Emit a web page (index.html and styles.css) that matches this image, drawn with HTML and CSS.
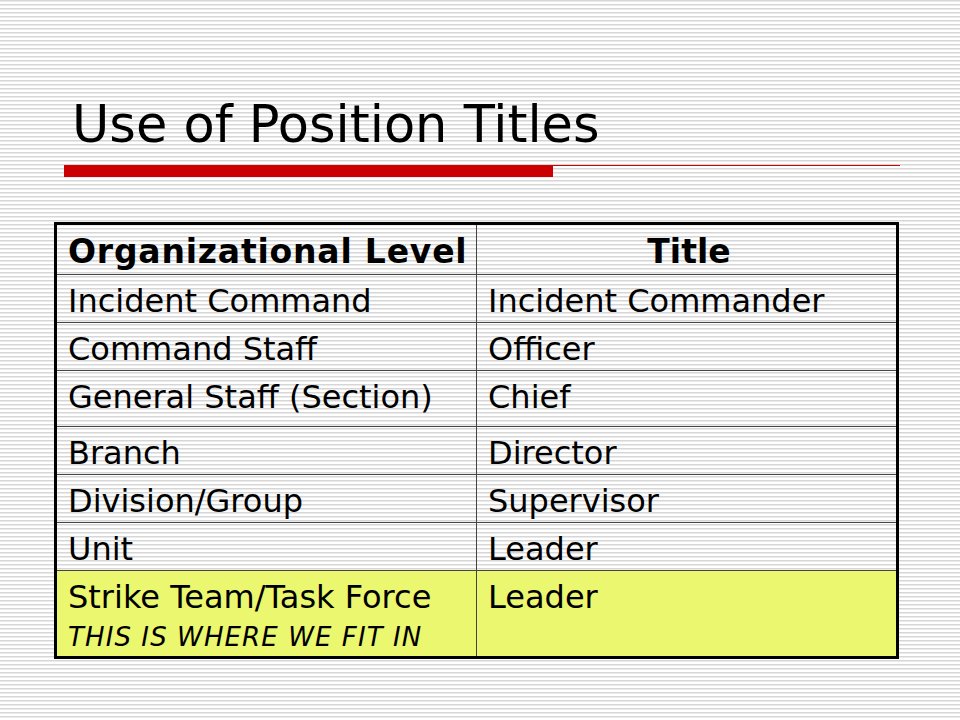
FILE: index.html
```html
<!DOCTYPE html>
<html>
<head>
<meta charset="utf-8">
<link rel="stylesheet" href="styles.css">
</head>
<body>
<div class="slide">
  <h1 class="title">Use of Position Titles</h1>
  <div class="rule">
    <div class="rule-thick"></div>
    <div class="rule-thin"></div>
  </div>
  <table class="grid">
    <colgroup>
      <col class="col-a">
      <col class="col-b">
    </colgroup>
    <thead>
      <tr class="row-head">
        <th class="left">Organizational Level</th>
        <th class="center">Title</th>
      </tr>
    </thead>
    <tbody>
      <tr class="row"><td>Incident Command</td><td>Incident Commander</td></tr>
      <tr class="row"><td>Command Staff</td><td>Officer</td></tr>
      <tr class="row row-tall"><td>General Staff (Section)</td><td>Chief</td></tr>
      <tr class="row"><td>Branch</td><td>Director</td></tr>
      <tr class="row"><td>Division/Group</td><td>Supervisor</td></tr>
      <tr class="row"><td>Unit</td><td>Leader</td></tr>
      <tr class="row row-hl"><td>Strike Team/Task Force<span class="note">THIS IS WHERE WE FIT IN</span></td><td>Leader</td></tr>
    </tbody>
  </table>
</div>
</body>
</html>
```

FILE: styles.css
```css
html, body {
  margin: 0;
  padding: 0;
}
body {
  width: 960px;
  height: 720px;
  overflow: hidden;
  background-color: #ffffff;
  background-image: repeating-linear-gradient(to bottom, #d6d6d6 0px, #d6d6d6 1px, #ebebeb 1px, #ebebeb 2px, #ffffff 2px, #ffffff 4px);
  font-family: "DejaVu Sans", Verdana, sans-serif;
  color: #000;
}
.slide {
  padding-top: 95px;
}
.title {
  margin: 0 0 0 72px;
  font-size: 51px;
  font-weight: normal;
  line-height: 60px;
  height: 60px;
}
.rule {
  display: flex;
  margin: 10px 0 0 64px;
  width: 836px;
  height: 12px;
}
.rule-thick {
  width: 489px;
  height: 12px;
  background: #cc0000;
}
.rule-thin {
  flex: 1;
  height: 1px;
  background: #d40000;
}
.grid {
  margin: 45px 0 0 54px;
  width: 842px;
  border-collapse: collapse;
  table-layout: fixed;
  border: 3px solid #000;
}
.col-a { width: 421px; }
.col-b { width: 421px; }
.grid th, .grid td {
  border: 1px solid #444;
  vertical-align: top;
  text-align: left;
  padding: 7px 6px 0 11px;
  font-size: 32px;
  line-height: 38px;
  white-space: nowrap;
}
.grid th {
  font-weight: bold;
  font-size: 33px;
}
.grid th.left {
  letter-spacing: 0.8px;
}
.grid th.center {
  text-align: center;
}
.row-head th {
  height: 41px;
  padding-top: 8px;
  border-top: 3px solid #000;
}
.row td {
  height: 40px;
}
.row-tall td {
  height: 48px;
}
.row-hl td {
  height: 78px;
  background: #ebf76e;
}
.note {
  display: block;
  margin-top: 6px;
  font-style: italic;
  font-size: 26px;
  line-height: 30px;
  letter-spacing: 1.1px;
}
```
